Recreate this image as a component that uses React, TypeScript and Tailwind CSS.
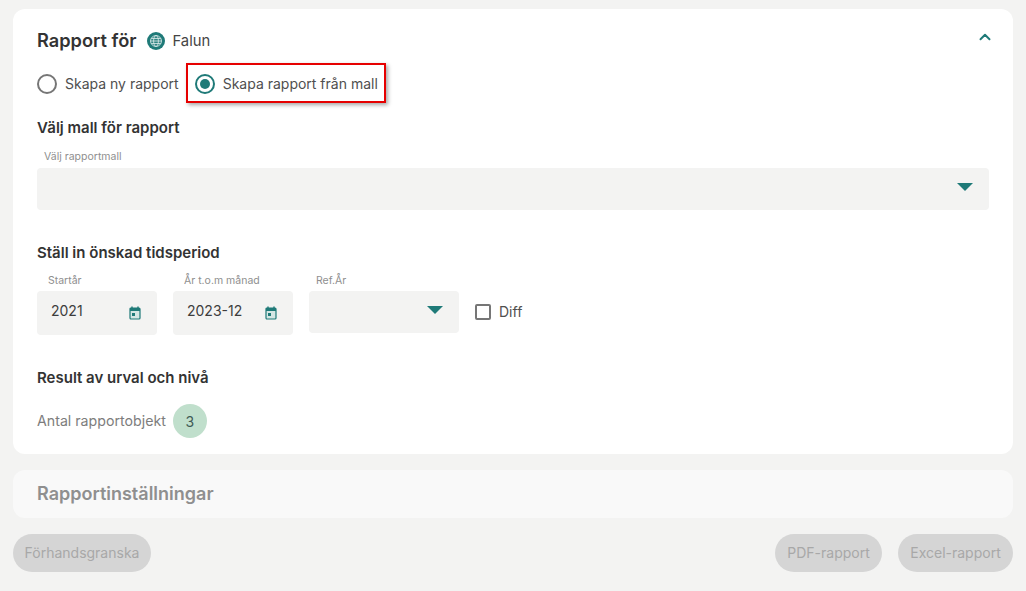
import { ChevronUp } from 'lucide-react'

function GlobeBadge() {
  return (
    <svg width="18" height="18" viewBox="0 0 18 18" fill="none" className="shrink-0">
      <circle cx="9" cy="9" r="9" fill="#1f7a78" />
      <g stroke="#ffffff" strokeWidth="0.8" opacity="0.85">
        <circle cx="9" cy="9" r="5.5" fill="#5fa19f" fillOpacity="0.35" />
        <ellipse cx="9" cy="9" rx="2.4" ry="5.5" />
        <path d="M3.5 9h11M4.2 6.5h9.6M4.2 11.5h9.6" />
      </g>
    </svg>
  )
}

function CalendarIcon() {
  return (
    <svg width="12" height="14" viewBox="0 0 12 14" fill="none" className="shrink-0">
      <path d="M3 0.5v2M9 0.5v2" stroke="#1f7a78" strokeWidth="1.4" />
      <rect x="1" y="2" width="10" height="11" rx="1" fill="#d5e6e4" stroke="#1f7a78" strokeWidth="1.2" />
      <rect x="1" y="2" width="10" height="3" fill="#1f7a78" />
      <rect x="3" y="7" width="3" height="3" fill="#1f7a78" />
    </svg>
  )
}

function Caret() {
  return <div className="h-0 w-0 border-x-[8px] border-t-[8px] border-x-transparent border-t-[#1f7a78]" />
}

function Radio({ checked, label }: { checked?: boolean; label: string }) {
  return (
    <div className="flex items-center gap-[8px]">
      <div
        className={
          checked
            ? 'flex h-[20px] w-[20px] items-center justify-center rounded-full border-2 border-[#1f7a78]'
            : 'h-[20px] w-[20px] rounded-full border-2 border-[#767676]'
        }
      >
        {checked ? <div className="h-[10px] w-[10px] rounded-full bg-[#1f7a78]" /> : null}
      </div>
      <span className="text-[14px] leading-[20px] text-[#4f4f4f]">{label}</span>
    </div>
  )
}

function DateField({ label, value }: { label: string; value: string }) {
  return (
    <div className="w-[120px]">
      <div className="h-[22px] pl-[11px] text-[10.5px] leading-[24px] text-[#8f8f8f]">{label}</div>
      <div className="flex h-[44px] items-start justify-between rounded-[4px] bg-[#f3f3f2] pl-[14px] pr-[16px]">
        <span className="pt-[10px] text-[14px] leading-[20px] text-[#3d3d3d]">{value}</span>
        <div className="pt-[15px]">
          <CalendarIcon />
        </div>
      </div>
    </div>
  )
}

function FooterButton({ label, width }: { label: string; width: string }) {
  return (
    <div
      className={`flex h-[38px] items-center justify-center rounded-full bg-[#d5d5d5] pb-[1px] text-[14px] text-[#a8a8a8] ${width}`}
    >
      {label}
    </div>
  )
}

export default function App() {
  return (
    <div className="h-[591px] w-[1026px] overflow-hidden bg-[#f3f3f2] px-[13px] pt-[9px] font-['Inter',sans-serif]">
      <div className="h-[445px] rounded-[12px] bg-white px-[24px]">
        <div className="flex h-[62px] items-center justify-between pt-[1px]">
          <div className="flex items-center">
            <h1 className="-mt-[1px] text-[18.2px] font-semibold leading-[24px] text-[#333333]">Rapport för</h1>
            <div className="ml-[11px]">
              <GlobeBadge />
            </div>
            <span className="ml-[7px] text-[14.8px] leading-[20px] text-[#454545]">Falun</span>
          </div>
          <ChevronUp size={18} strokeWidth={2.6} className="-mr-[5px] -mt-[7px] text-[#1f7a78]" />
        </div>

        <div className="flex h-[26px] items-center">
          <Radio label="Skapa ny rapport" />
          <div className="relative ml-[16px]">
            <div className="absolute -bottom-[9px] -left-[9px] -right-[8px] -top-[11px] border-2 border-[#e60000] shadow-[2px_2px_4px_rgba(0,0,0,0.35)]" />
            <Radio checked label="Skapa rapport från mall" />
          </div>
        </div>

        <h2 className="mt-[21px] text-[15px] font-semibold leading-[20px] text-[#333333]">Välj mall för rapport</h2>
        <div className="mt-[11px] h-[19px] pl-[7px] text-[10.5px] leading-[16px] text-[#8f8f8f]">Välj rapportmall</div>
        <div className="flex h-[42px] w-[952px] items-start justify-end rounded-[4px] bg-[#f3f3f2] pr-[16px] pt-[15px]">
          <Caret />
        </div>

        <h2 className="mt-[33px] text-[15px] font-semibold leading-[20px] text-[#333333]">Ställ in önskad tidsperiod</h2>
        <div className="mt-[6px] flex items-start gap-[16px]">
          <DateField label="Startår" value="2021" />
          <DateField label="År t.o.m månad" value="2023-12" />
          <div className="w-[150px]">
            <div className="h-[22px] pl-[7px] text-[10.5px] leading-[24px] text-[#8f8f8f]">Ref.År</div>
            <div className="flex h-[42px] items-start justify-end rounded-[4px] bg-[#f3f3f2] pr-[16px] pt-[15px]">
              <Caret />
            </div>
          </div>
          <div className="mt-[22px] flex h-[42px] items-center gap-[8px]">
            <div className="h-[16px] w-[16px] rounded-[2px] border-2 border-[#767676]" />
            <span className="text-[14px] leading-[20px] text-[#4f4f4f]">Diff</span>
          </div>
        </div>

        <h2 className="mt-[33px] text-[15px] font-semibold leading-[20px] text-[#333333]">Result av urval och nivå</h2>
        <div className="mt-[16px] flex items-center gap-[7px]">
          <span className="text-[14.2px] leading-[20px] text-[#7d7d7d]">Antal rapportobjekt</span>
          <div className="flex h-[34px] w-[34px] items-center justify-center rounded-full bg-[#c0dfcc] text-[14px] text-[#3f5a55]">
            3
          </div>
        </div>
      </div>

      <div className="mt-[16px] flex h-[48px] items-center rounded-[12px] bg-[#f9f9f9] px-[24px]">
        <h2 className="text-[18px] font-semibold leading-[24px] text-[#8f8f8f]">Rapportinställningar</h2>
      </div>

      <div className="mt-[16px] flex items-center">
        <FooterButton label="Förhandsgranska" width="w-[138px]" />
        <div className="ml-auto flex gap-[16px]">
          <FooterButton label="PDF-rapport" width="w-[107px]" />
          <FooterButton label="Excel-rapport" width="w-[115px]" />
        </div>
      </div>
    </div>
  )
}
